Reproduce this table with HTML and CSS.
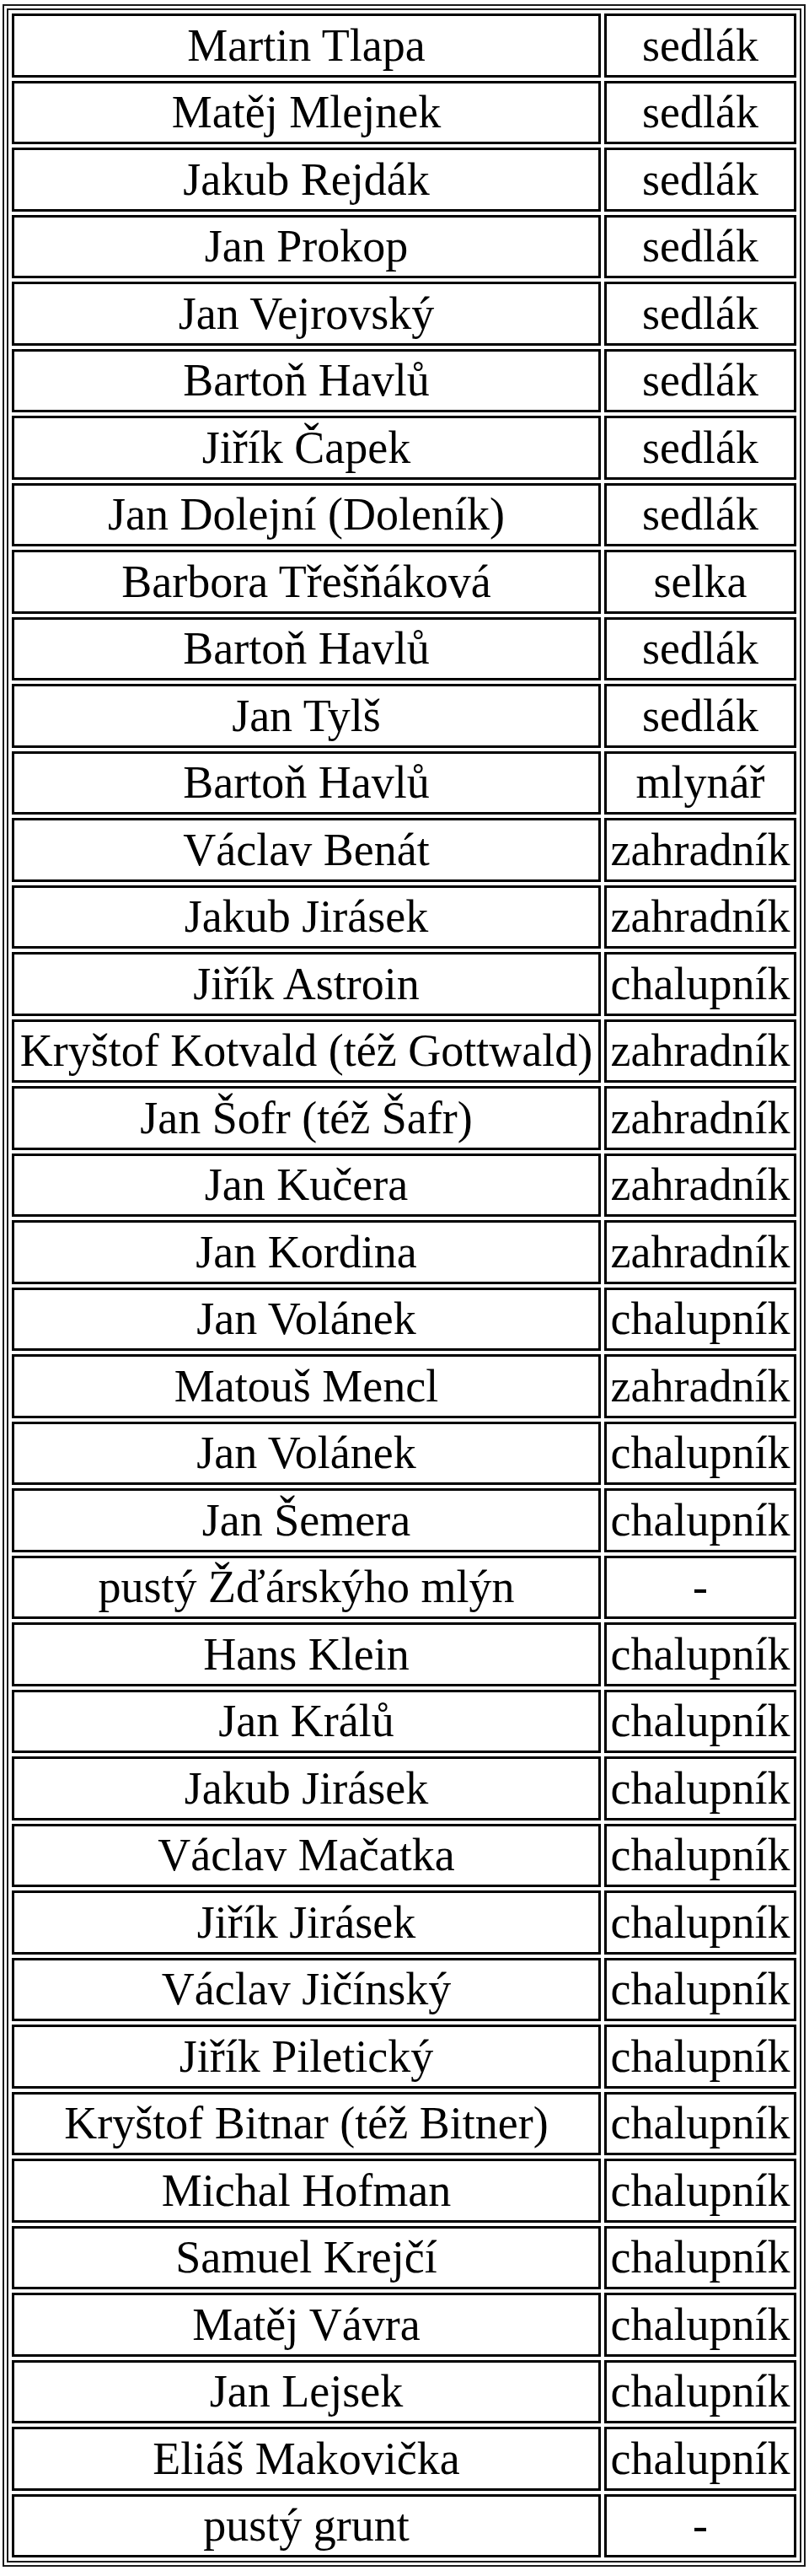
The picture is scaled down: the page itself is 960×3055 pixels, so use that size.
FILE: index.html
```html
<!DOCTYPE html>
<html lang="cs">
<head>
<meta charset="utf-8">
<title>Seznam</title>
<link rel="stylesheet" href="styles.css">
</head>
<body>
<table class="list">
<tbody>
<tr><td class="name">Martin Tlapa</td><td class="role">sedlák</td></tr>
<tr><td class="name">Matěj Mlejnek</td><td class="role">sedlák</td></tr>
<tr><td class="name">Jakub Rejdák</td><td class="role">sedlák</td></tr>
<tr><td class="name">Jan Prokop</td><td class="role">sedlák</td></tr>
<tr><td class="name">Jan Vejrovský</td><td class="role">sedlák</td></tr>
<tr><td class="name">Bartoň Havlů</td><td class="role">sedlák</td></tr>
<tr><td class="name">Jiřík Čapek</td><td class="role">sedlák</td></tr>
<tr><td class="name">Jan Dolejní (Doleník)</td><td class="role">sedlák</td></tr>
<tr><td class="name">Barbora Třešňáková</td><td class="role">selka</td></tr>
<tr><td class="name">Bartoň Havlů</td><td class="role">sedlák</td></tr>
<tr><td class="name">Jan Tylš</td><td class="role">sedlák</td></tr>
<tr><td class="name">Bartoň Havlů</td><td class="role">mlynář</td></tr>
<tr><td class="name">Václav Benát</td><td class="role">zahradník</td></tr>
<tr><td class="name">Jakub Jirásek</td><td class="role">zahradník</td></tr>
<tr><td class="name">Jiřík Astroin</td><td class="role">chalupník</td></tr>
<tr><td class="name">Kryštof Kotvald (též Gottwald)</td><td class="role">zahradník</td></tr>
<tr><td class="name">Jan Šofr (též Šafr)</td><td class="role">zahradník</td></tr>
<tr><td class="name">Jan Kučera</td><td class="role">zahradník</td></tr>
<tr><td class="name">Jan Kordina</td><td class="role">zahradník</td></tr>
<tr><td class="name">Jan Volánek</td><td class="role">chalupník</td></tr>
<tr><td class="name">Matouš Mencl</td><td class="role">zahradník</td></tr>
<tr><td class="name">Jan Volánek</td><td class="role">chalupník</td></tr>
<tr><td class="name">Jan Šemera</td><td class="role">chalupník</td></tr>
<tr><td class="name">pustý Žďárskýho mlýn</td><td class="role">-</td></tr>
<tr><td class="name">Hans Klein</td><td class="role">chalupník</td></tr>
<tr><td class="name">Jan Králů</td><td class="role">chalupník</td></tr>
<tr><td class="name">Jakub Jirásek</td><td class="role">chalupník</td></tr>
<tr><td class="name">Václav Mačatka</td><td class="role">chalupník</td></tr>
<tr><td class="name">Jiřík Jirásek</td><td class="role">chalupník</td></tr>
<tr><td class="name">Václav Jičínský</td><td class="role">chalupník</td></tr>
<tr><td class="name">Jiřík Piletický</td><td class="role">chalupník</td></tr>
<tr><td class="name">Kryštof Bitnar (též Bitner)</td><td class="role">chalupník</td></tr>
<tr><td class="name">Michal Hofman</td><td class="role">chalupník</td></tr>
<tr><td class="name">Samuel Krejčí</td><td class="role">chalupník</td></tr>
<tr><td class="name">Matěj Vávra</td><td class="role">chalupník</td></tr>
<tr><td class="name">Jan Lejsek</td><td class="role">chalupník</td></tr>
<tr><td class="name">Eliáš Makovička</td><td class="role">chalupník</td></tr>
<tr><td class="name">pustý grunt</td><td class="role">-</td></tr>
</tbody>
</table>
</body>
</html>
```
FILE: styles.css
```css
html, body {
  margin: 0;
  padding: 0;
  background: #fff;
}

body {
  padding: 5px 0 0 3px;
  font-family: "Liberation Serif", "Times New Roman", serif;
  color: #000;
}

.list {
  border: 7px double #1a1a1a;
  border-collapse: separate;
  border-spacing: 4px;
  table-layout: fixed;
  width: 953px;
}

.list td {
  box-sizing: border-box;
  border: 3px solid #000;
  height: 75.5px;
  padding: 0 4px;
  text-align: center;
  vertical-align: middle;
  font-size: 54px;
  line-height: 62px;
  white-space: nowrap;
}

.list td.name {
  width: 699px;
}

.list td.role {
  width: 228px;
}
```
